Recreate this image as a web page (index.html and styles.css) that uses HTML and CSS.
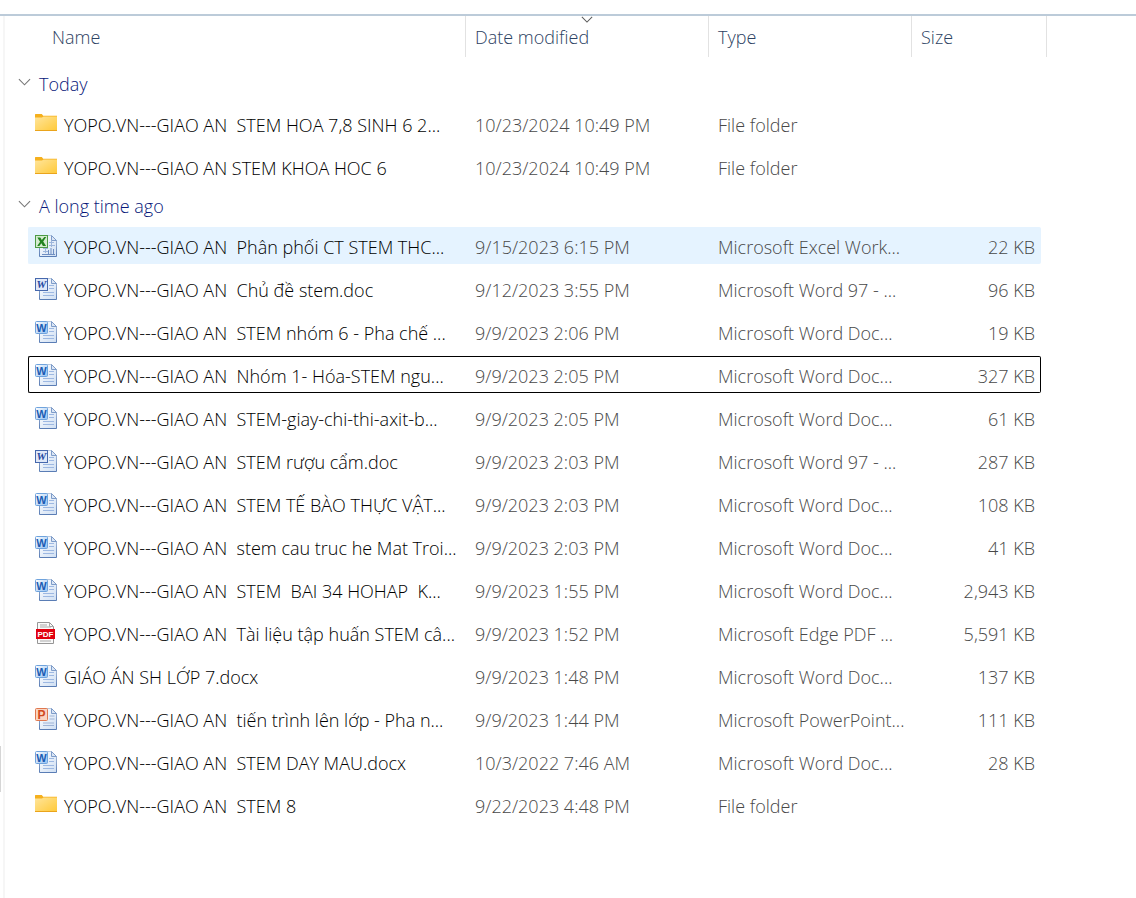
FILE: index.html
```html
<!DOCTYPE html>
<html lang="en">
<head>
<meta charset="utf-8">
<meta name="viewport" content="width=device-width, initial-scale=1">
<title>Files</title>
<link rel="stylesheet" href="styles.css">
</head>
<body>
<svg class="defs" aria-hidden="true">
  <defs>
    <linearGradient id="gFolder" x1="0" y1="0" x2="1" y2="1"><stop offset="0" stop-color="#ffe59c"/><stop offset="1" stop-color="#ffc937"/></linearGradient>
    <linearGradient id="gPage" x1="0" y1="0" x2="1" y2="1"><stop offset="0" stop-color="#ffffff"/><stop offset="1" stop-color="#cfdff3"/></linearGradient>
    <linearGradient id="gWord" x1="0" y1="0" x2="1" y2="1"><stop offset="0" stop-color="#ffffff"/><stop offset="1" stop-color="#93c0f2"/></linearGradient>
    <linearGradient id="gEdge" x1="0" y1="0" x2="0" y2="1"><stop offset="0" stop-color="#b9c9e0"/><stop offset="1" stop-color="#5a7db5"/></linearGradient>
    <symbol id="folder" viewBox="0 0 24 24">
      <path d="M1 2.600q0-.6.6-.6h6.2l1.400 1.800H23V8H1z" fill="#f5b01d"/>
      <path d="M1 5.500h7l1.600-1H23V19H1z" fill="url(#gFolder)"/>
      <path d="M1 18.500h22" stroke="#eaa41c"/>
    </symbol>
    <symbol id="page" viewBox="0 0 24 24">
      <path d="M5.500 1.500h12l5 5v16h-17z" fill="url(#gPage)" stroke="url(#gEdge)"/>
      <path d="M17.500 1.500v5h5z" fill="#dbe6f5" stroke="#7e9cc9"/>
    </symbol>
    <symbol id="lines" viewBox="0 0 24 24">
      <path d="M15 8.500h5M15 11.500h5M9 15.500h11M9 18.500h11" stroke="#9db8e2"/>
    </symbol>
    <symbol id="docx" viewBox="0 0 24 24">
      <use href="#page"/><use href="#lines"/>
      <rect x="1.500" y="1.500" width="12" height="12" rx="1" fill="url(#gWord)" stroke="#6fa3dd"/>
      <text x="7.500" y="12" class="glyph glyph-word">W</text>
    </symbol>
    <symbol id="doc" viewBox="0 0 24 24">
      <use href="#page"/><use href="#lines"/>
      <rect x="1.500" y="1.500" width="12" height="12" fill="#dfe8f8" stroke="#4668ad"/>
      <text x="7.500" y="11" class="glyph glyph-old">W</text>
    </symbol>
    <symbol id="excel" viewBox="0 0 24 24">
      <use href="#page"/>
      <path d="M9 14.500h5M9 17.500h5M11.500 12v7M15 8.500h5M15 11.500h6M17.500 7v6" stroke="#9db6dc"/>
      <path d="M8 20.500h13M14.500 20v-4M17 20v-6M19.500 20v-5" stroke="#6f8fc2"/>
      <rect x="1.500" y="1.500" width="12" height="12" fill="#d5ecd0" stroke="#4c9a45"/>
      <path d="M3.300 3.500h3l1.500 2.600L10.300 3h1.900L9.200 7.500l2.900 4.500H8.900L7.400 9.300 5.300 12H3.200l2.900-4.300z" fill="#23831f"/>
    </symbol>
    <symbol id="ppt" viewBox="0 0 24 24">
      <use href="#page"/>
      <path d="M15.500 9h5M15.500 12h5M9 16h11M9 18.500h11" stroke="#9fb4d6"/>
      <rect x="1.500" y="1.500" width="12" height="12" rx="1" fill="#fbd5c2" stroke="#e0784f"/>
      <text x="7.500" y="12" class="glyph glyph-ppt">P</text>
    </symbol>
    <symbol id="pdf" viewBox="0 0 24 24">
      <path d="M3.500 1.500h12l4 4v17h-16z" fill="#fafafa" stroke="#969696"/>
      <path d="M15.500 1.500v4h4M6 4h7M6 6h11M6 20h11" fill="none" stroke="#a9a9a9"/>
      <path d="M2 8h19v10H2z" fill="#e1000f"/>
      <text x="11.500" y="16" class="glyph glyph-pdf">PDF</text>
    </symbol>
    <symbol id="chevron" viewBox="0 0 14 8">
      <path d="M1 1l6 6 6-6" fill="none" stroke="currentColor" stroke-width="1.200"/>
    </symbol>
  </defs>
</svg>

<div class="window">
  <header class="topbar"></header>
  <div class="content">
    <aside class="nav-edge"><span class="nav-thumb"></span></aside>
    <main class="list">
      <table class="files">
        <colgroup><col><col class="col-date"><col class="col-type"><col class="col-size"><col class="col-end"></colgroup>
        <thead>
          <tr>
            <th class="head-name" scope="col"><button type="button">Name</button></th>
            <th scope="col"><svg class="sort-mark" aria-hidden="true"><use href="#chevron"/></svg><button type="button">Date modified</button></th>
            <th scope="col"><button type="button">Type</button></th>
            <th scope="col" colspan="2"><button type="button">Size</button></th>
          </tr>
        </thead>
        <tbody>
          <tr class="group group-first"><th colspan="5" scope="rowgroup"><button type="button" aria-expanded="true"><svg class="toggle" aria-hidden="true"><use href="#chevron"/></svg>Today</button></th></tr>
          <tr><td><div class="name"><svg class="icon"><use href="#folder"/></svg>YOPO.VN---GIAO AN  STEM HOA 7,8 SINH 6 2...</div></td><td>10/23/2024 10:49 PM</td><td>File folder</td><td class="size"></td></tr>
          <tr><td><div class="name"><svg class="icon"><use href="#folder"/></svg>YOPO.VN---GIAO AN STEM KHOA HOC 6</div></td><td>10/23/2024 10:49 PM</td><td>File folder</td><td class="size"></td></tr>
        </tbody>
        <tbody>
          <tr class="group"><th colspan="5" scope="rowgroup"><button type="button" aria-expanded="true"><svg class="toggle" aria-hidden="true"><use href="#chevron"/></svg>A long time ago</button></th></tr>
          <tr class="hovered"><td><div class="name"><svg class="icon"><use href="#excel"/></svg>YOPO.VN---GIAO AN  Phân phối CT STEM THC...</div></td><td>9/15/2023 6:15 PM</td><td>Microsoft Excel Work...</td><td class="size">22 KB</td></tr>
          <tr><td><div class="name"><svg class="icon"><use href="#doc"/></svg>YOPO.VN---GIAO AN  Chủ đề stem.doc</div></td><td>9/12/2023 3:55 PM</td><td>Microsoft Word 97 - ...</td><td class="size">96 KB</td></tr>
          <tr><td><div class="name"><svg class="icon"><use href="#docx"/></svg>YOPO.VN---GIAO AN  STEM nhóm 6 - Pha chế ...</div></td><td>9/9/2023 2:06 PM</td><td>Microsoft Word Doc...</td><td class="size">19 KB</td></tr>
          <tr class="focused"><td><div class="name"><svg class="icon"><use href="#docx"/></svg>YOPO.VN---GIAO AN  Nhóm 1- Hóa-STEM ngu...</div></td><td>9/9/2023 2:05 PM</td><td>Microsoft Word Doc...</td><td class="size">327 KB</td></tr>
          <tr><td><div class="name"><svg class="icon"><use href="#docx"/></svg>YOPO.VN---GIAO AN  STEM-giay-chi-thi-axit-b...</div></td><td>9/9/2023 2:05 PM</td><td>Microsoft Word Doc...</td><td class="size">61 KB</td></tr>
          <tr><td><div class="name"><svg class="icon"><use href="#doc"/></svg>YOPO.VN---GIAO AN  STEM rượu cẩm.doc</div></td><td>9/9/2023 2:03 PM</td><td>Microsoft Word 97 - ...</td><td class="size">287 KB</td></tr>
          <tr><td><div class="name"><svg class="icon"><use href="#docx"/></svg>YOPO.VN---GIAO AN  STEM TẾ BÀO THỰC VẬT...</div></td><td>9/9/2023 2:03 PM</td><td>Microsoft Word Doc...</td><td class="size">108 KB</td></tr>
          <tr><td><div class="name"><svg class="icon"><use href="#docx"/></svg>YOPO.VN---GIAO AN  stem cau truc he Mat Troi...</div></td><td>9/9/2023 2:03 PM</td><td>Microsoft Word Doc...</td><td class="size">41 KB</td></tr>
          <tr><td><div class="name"><svg class="icon"><use href="#docx"/></svg>YOPO.VN---GIAO AN  STEM  BAI 34 HOHAP  K...</div></td><td>9/9/2023 1:55 PM</td><td>Microsoft Word Doc...</td><td class="size">2,943 KB</td></tr>
          <tr><td><div class="name"><svg class="icon"><use href="#pdf"/></svg>YOPO.VN---GIAO AN  Tài liệu tập huấn STEM câ...</div></td><td>9/9/2023 1:52 PM</td><td>Microsoft Edge PDF ...</td><td class="size">5,591 KB</td></tr>
          <tr><td><div class="name"><svg class="icon"><use href="#docx"/></svg>GIÁO ÁN SH LỚP 7.docx</div></td><td>9/9/2023 1:48 PM</td><td>Microsoft Word Doc...</td><td class="size">137 KB</td></tr>
          <tr><td><div class="name"><svg class="icon"><use href="#ppt"/></svg>YOPO.VN---GIAO AN  tiến trình lên lớp - Pha n...</div></td><td>9/9/2023 1:44 PM</td><td>Microsoft PowerPoint...</td><td class="size">111 KB</td></tr>
          <tr><td><div class="name"><svg class="icon"><use href="#docx"/></svg>YOPO.VN---GIAO AN  STEM DAY MAU.docx</div></td><td>10/3/2022 7:46 AM</td><td>Microsoft Word Doc...</td><td class="size">28 KB</td></tr>
          <tr><td><div class="name"><svg class="icon"><use href="#folder"/></svg>YOPO.VN---GIAO AN  STEM 8</div></td><td>9/22/2023 4:48 PM</td><td>File folder</td><td class="size"></td></tr>
        </tbody>
      </table>
    </main>
  </div>
</div>
</body>
</html>
```
FILE: styles.css
```css
* { box-sizing: border-box; }

body {
  margin: 0;
  background: #fff;
  color: #484848;
  font: 300 18px/24px "Open Sans", "Noto Sans", sans-serif;
}

button {
  padding: 0;
  border: 0;
  background: none;
  color: inherit;
  font: inherit;
}

.defs { position: absolute; width: 0; height: 0; }

.window { display: flex; flex-direction: column; min-height: 100vh; }
.topbar { height: 16px; border-bottom: 2px solid #bccbd9; }
.content { display: flex; flex: 1; }

.nav-edge { position: relative; flex: none; width: 5px; border-right: 2px solid #f6f6f6; }
.nav-thumb { position: absolute; left: 0; top: 730px; width: 1px; height: 46px; background: #d5d5d5; }

.list { flex: 1; min-width: 0; padding: 0 89px 0 23px; }

.files {
  width: 100%;
  margin-top: -6px;
  border-collapse: separate;
  border-spacing: 0 6px;
  table-layout: fixed;
  white-space: pre;
}

.col-date { width: 243px; }
.col-type { width: 203px; }
.col-size { width: 129px; }
.col-end { width: 6px; }

thead th {
  position: relative;
  height: 41px;
  padding: 0 0 0 9px;
  border-right: 1px solid #e2e2e2;
  color: #2c4262;
  font-weight: inherit;
  text-align: left;
}
thead .head-name { padding-left: 24px; }

.sort-mark {
  position: absolute;
  top: 0;
  left: calc(50% - 6px);
  width: 12px;
  height: 7px;
  color: #5c5c5c;
}

.group th { height: 30px; padding: 0; font-weight: inherit; text-align: left; }
.group-first th { height: 36px; padding-top: 6px; }
.group button { display: flex; align-items: center; gap: 8px; margin-left: -10px; color: #08187a; }
.toggle { width: 13px; height: 8px; margin-bottom: 4px; color: #777; }

td {
  height: 37px;
  padding: 2px 0 0 9px;
  border: 1px solid transparent;
  border-width: 1px 0;
}
td:first-child { padding-left: 5px; border-left-width: 1px; border-radius: 2px 0 0 2px; }
td:last-child { border-right-width: 1px; border-radius: 0 2px 2px 0; }
.size { padding-right: 5px; text-align: right; }

.name { display: flex; align-items: center; gap: 6px; color: #000; }
.icon { flex: none; width: 24px; height: 24px; margin-bottom: 2px; }

.hovered td { background: #e5f3ff; border-color: #e5f3ff; }
.focused td { border-color: #000; }

.glyph { font-family: "Liberation Sans", sans-serif; font-weight: 700; text-anchor: middle; }
.glyph-word { font-size: 11px; fill: #1b5cb3; }
.glyph-old { font-family: "Liberation Serif", serif; font-size: 11px; font-style: italic; fill: #2347a0; }
.glyph-ppt { font-size: 12px; fill: #d04a1c; }
.glyph-pdf { font-size: 8px; fill: #fff; }
```
